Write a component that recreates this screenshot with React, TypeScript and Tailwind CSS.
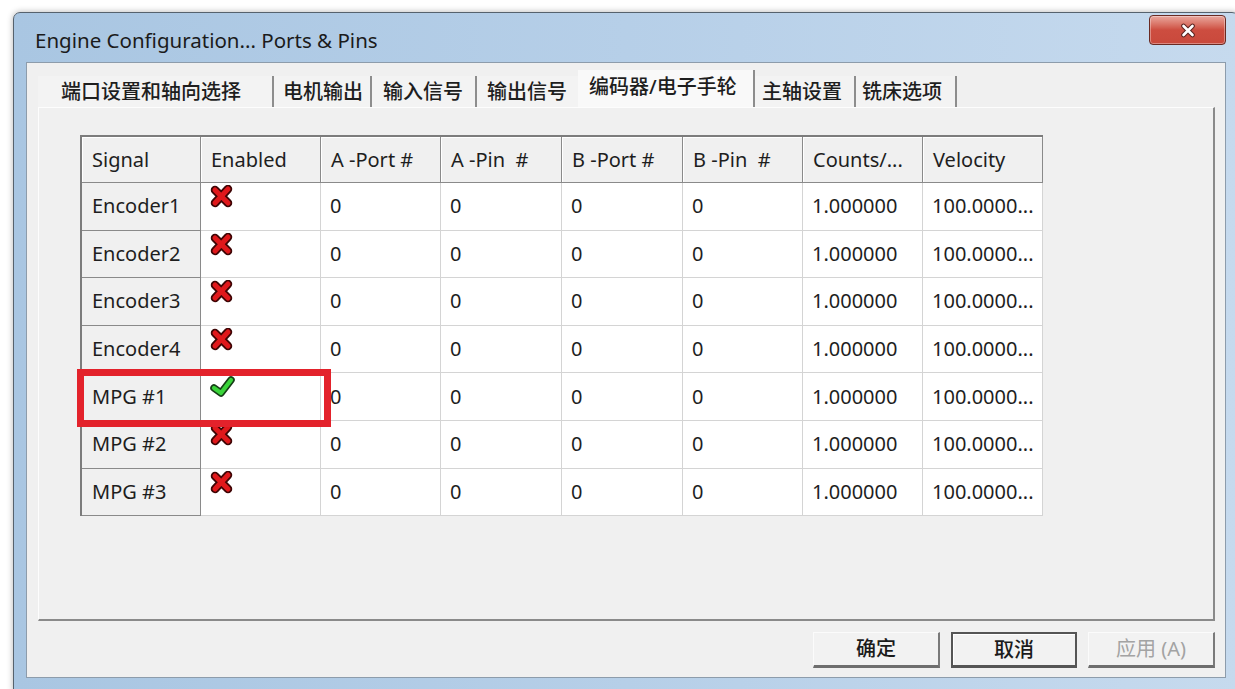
import React from "react";

const sans = "font-['Noto_Sans','Noto_Sans_CJK_SC',sans-serif]";

const colWidths = [
  "w-[119px]",
  "w-[120px]",
  "w-[120px]",
  "w-[121px]",
  "w-[121px]",
  "w-[120px]",
  "w-[120px]",
  "w-[120px]",
];

const headers = ["Signal", "Enabled", "A -Port #", "A -Pin  #", "B -Port #", "B -Pin  #", "Counts/...", "Velocity"];

const signals = [
  { name: "Encoder1", enabled: false },
  { name: "Encoder2", enabled: false },
  { name: "Encoder3", enabled: false },
  { name: "Encoder4", enabled: false },
  { name: "MPG #1", enabled: true },
  { name: "MPG #2", enabled: false },
  { name: "MPG #3", enabled: false },
];

const tabs = [
  { label: "端口设置和轴向选择", cls: "w-[236px] pl-[23px] border-r-2" },
  { label: "电机输出", cls: "w-[98px] pl-[9px] border-r-2" },
  { label: "输入信号", cls: "w-[105px] pl-[11px] border-r-2" },
  { label: "输出信号", cls: "w-[101px] pl-[10px]" },
  { label: "编码器/电子手轮", cls: "w-[177px] pl-[11px] border-r-2", active: true },
  { label: "主轴设置", cls: "w-[101px] pl-[7px] border-r-2" },
  { label: "铣床选项", cls: "w-[101px] pl-[6px] border-r-2" },
];

function CrossIcon() {
  return (
    <svg width="24" height="24" viewBox="0 0 24 24">
      <path d="M5 5 L18 18 M18 4 L5 18" stroke="#3e0505" strokeWidth="8.5" strokeLinecap="round" fill="none" />
      <path d="M5 5 L18 18 M18 4 L5 18" stroke="#e0181b" strokeWidth="5" strokeLinecap="round" fill="none" />
    </svg>
  );
}

function CheckIcon() {
  return (
    <svg width="26" height="26" viewBox="0 0 26 26">
      <path d="M4 13 L11 18 L21 5" stroke="#163d16" strokeWidth="7.5" strokeLinecap="round" strokeLinejoin="round" fill="none" />
      <path d="M4 13 L11 18 L21 5" stroke="#3ad43a" strokeWidth="4.2" strokeLinecap="round" strokeLinejoin="round" fill="none" />
    </svg>
  );
}

function SignalGrid() {
  return (
    <div className="relative w-[963px] border-l-2 border-t-2 border-[#7c7c7c] text-[20px] text-[#1e1e1e]">
      {/* header row */}
      <div className="flex h-[46px]">
        {headers.map((h, i) => (
          <div
            key={h}
            className={`${colWidths[i]} flex items-center pl-[10px] leading-none whitespace-pre bg-[#f0f0f0] border-r border-b border-[#8a8a8a] shadow-[inset_1px_1px_0_#ffffff]`}
          >
            {h}
          </div>
        ))}
      </div>

      {signals.map((s) => (
        <div key={s.name} className="flex h-[47.6px]">
          <div className={`${colWidths[0]} flex items-center pl-[10px] leading-none bg-[#f0f0f0] border-r border-b border-[#8a8a8a]`}>
            {s.name}
          </div>
          <div className={`${colWidths[1]} flex items-start pl-[9px] pt-[2px] bg-white border-r border-b border-[#d4d4d4]`}>
            {s.enabled ? <CheckIcon /> : <CrossIcon />}
          </div>
          {["0", "0", "0", "0", "1.000000", "100.0000..."].map((v, j) => (
            <div
              key={j}
              className={`${colWidths[j + 2]} flex items-center pl-[9px] leading-none bg-white border-r border-b border-[#d4d4d4]`}
            >
              {v}
            </div>
          ))}
        </div>
      ))}

      {/* highlight around the enabled MPG row */}
      <div className="absolute left-[-5px] top-[232px] w-[254px] h-[58px] border-[7px] border-[#e3222b]" />
    </div>
  );
}

export default function App() {
  return (
    <div className={`w-[1235px] h-[689px] overflow-hidden bg-white ${sans}`}>
      <div className="ml-[13px] mt-[12px] w-[1226px] h-[680px] rounded-t-[7px] border border-[#56626d] bg-gradient-to-r from-[#a9c6e2] via-[#b6cfe8] to-[#c6daee] px-[12px] shadow-[0_0_6px_rgba(0,0,0,0.3)]">
        {/* title bar */}
        <div className="flex h-[49px] items-start justify-between">
          <div className="mt-[14px] ml-[9px] text-[20.5px] leading-[26px] text-[#1b1b1b]">
            Engine Configuration... Ports &amp; Pins
          </div>
          <button className="mt-[2px] flex h-[30px] w-[77px] items-center justify-center rounded-[4px] border border-[#6a2a22] bg-gradient-to-b from-[#e8a79e] via-[#cd4d40] to-[#c9493c] shadow-[inset_0_0_0_1px_rgba(255,255,255,0.35)]">
            <svg width="16" height="15" viewBox="0 0 16 15">
              <path d="M3.5 3 L12.5 12 M12.5 3 L3.5 12" stroke="#5a2420" strokeWidth="4.6" strokeLinecap="round" fill="none" />
              <path d="M3.5 3 L12.5 12 M12.5 3 L3.5 12" stroke="#ffffff" strokeWidth="2.6" strokeLinecap="round" fill="none" />
            </svg>
          </button>
        </div>

        {/* client area */}
        <div className="h-[616px] border border-[#8d9cab] bg-[#f0f0f0] pl-[11px] pr-[10px] pt-[7px]">
          {/* tab strip */}
          <div className="flex h-[37px] items-end text-[20px] font-medium text-[#1e1e1e]">
            {tabs.map((t) =>
              t.active ? (
                <div key={t.label} className={`${t.cls} flex h-[37px] items-center pb-[3px] bg-[#f9f9f9] border-[#8d8d8d] leading-none`}>
                  {t.label}
                </div>
              ) : (
                <div key={t.label} className={`${t.cls} flex h-[31px] items-center bg-[#f3f3f3] border-[#8d8d8d] leading-none`}>
                  {t.label}
                </div>
              )
            )}
          </div>

          {/* tab page */}
          <div className="h-[514px] border-t border-l border-[#fdfdfd] border-r-2 border-b-2 border-r-[#8a8a8a] border-b-[#8a8a8a] pl-[41px] pt-[27px]">
            <SignalGrid />
          </div>

          {/* dialog buttons */}
          <div className="mt-[11px] flex justify-end gap-[11px] text-[20px] font-medium leading-none">
            <button className="flex h-[36px] w-[127px] items-center justify-center bg-[#f2f2f2] border-t border-l border-[#fbfbfb] border-r-2 border-b-[3px] border-r-[#7a7a7a] border-b-[#6e6e6e] text-[#1b1b1b]">
              确定
            </button>
            <button className="flex h-[36px] w-[126px] items-center justify-center bg-[#f2f2f2] border-2 border-[#555555] border-b-[3px] shadow-[inset_1px_1px_0_#ffffff] text-[#1b1b1b]">
              取消
            </button>
            <button className="flex h-[36px] w-[127px] items-center justify-center bg-[#f2f2f2] border-t border-l border-[#fbfbfb] border-r-2 border-b-[3px] border-r-[#7a7a7a] border-b-[#6e6e6e] font-normal text-[#a3a3a3]">
              应用 (A)
            </button>
          </div>
        </div>
      </div>
    </div>
  );
}
